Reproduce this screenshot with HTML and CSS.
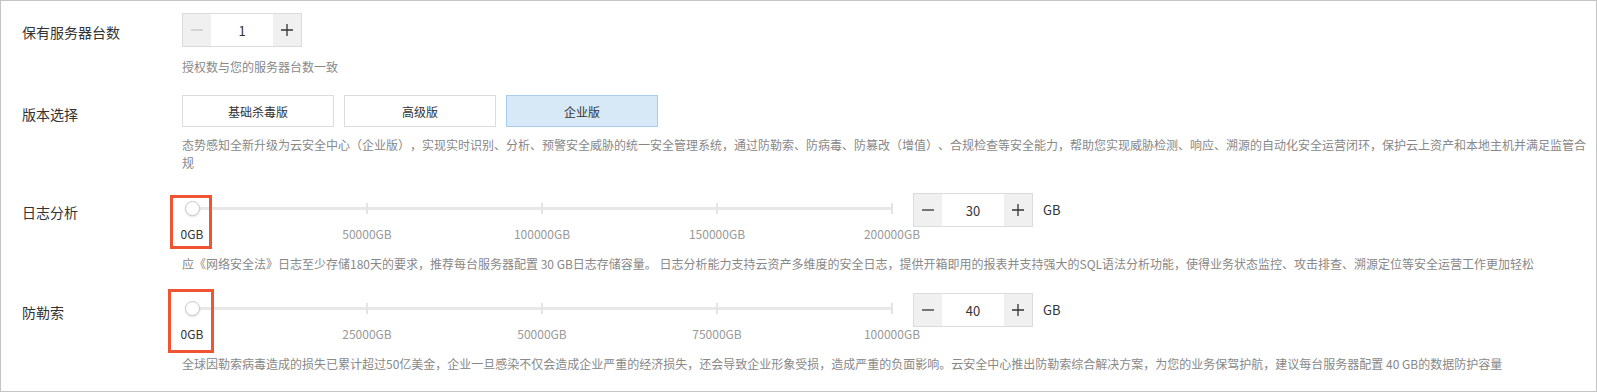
FILE: index.html
```html
<!DOCTYPE html>
<html lang="zh-CN">
<head>
<meta charset="utf-8">
<title>云安全中心</title>
<link rel="stylesheet" href="styles.css">
</head>
<body>
<div class="frame">
  <div class="row row-count">
    <div class="label">保有服务器台数</div>
    <div class="content">
      <div class="stepper">
        <span class="step-btn is-disabled"><svg width="12" height="12" viewBox="0 0 12 12"><path d="M0 6H12" /></svg></span>
        <span class="step-val">1</span>
        <span class="step-btn"><svg width="12" height="12" viewBox="0 0 12 12"><path d="M0 6H12M6 0V12" /></svg></span>
      </div>
      <div class="hint">授权数与您的服务器台数一致</div>
    </div>
  </div>

  <div class="row row-edition">
    <div class="label">版本选择</div>
    <div class="content">
      <div class="options">
        <span class="option">基础杀毒版</span>
        <span class="option">高级版</span>
        <span class="option is-active">企业版</span>
      </div>
      <div class="desc desc-edition">态势感知全新升级为云安全中心（企业版），实现实时识别、分析、预警安全威胁的统一安全管理系统，通过防勒索、防病毒、防篡改（增值）、合规检查等安全能力，帮助您实现威胁检测、响应、溯源的自动化安全运营闭环，保护云上资产和本地主机并满足监管合规</div>
    </div>
  </div>

  <div class="row row-slider">
    <div class="label">日志分析</div>
    <div class="content">
      <div class="slider-line">
        <div class="slider">
          <div class="track"></div>
          <span class="tick" style="left:25%"></span>
          <span class="tick" style="left:50%"></span>
          <span class="tick" style="left:75%"></span>
          <span class="tick" style="left:100%"></span>
          <span class="handle"></span>
          <span class="tick-label is-current" style="left:0%">0GB</span>
          <span class="tick-label" style="left:25%">50000GB</span>
          <span class="tick-label" style="left:50%">100000GB</span>
          <span class="tick-label" style="left:75%">150000GB</span>
          <span class="tick-label" style="left:100%">200000GB</span>
          <span class="mark mark-a"></span>
        </div>
        <div class="stepper">
          <span class="step-btn"><svg width="12" height="12" viewBox="0 0 12 12"><path d="M0 6H12" /></svg></span>
          <span class="step-val">30</span>
          <span class="step-btn"><svg width="12" height="12" viewBox="0 0 12 12"><path d="M0 6H12M6 0V12" /></svg></span>
        </div>
        <span class="unit">GB</span>
      </div>
      <div class="desc desc-slider">应《网络安全法》日志至少存储180天的要求，推荐每台服务器配置 30 GB日志存储容量。 日志分析能力支持云资产多维度的安全日志，提供开箱即用的报表并支持强大的SQL语法分析功能，使得业务状态监控、攻击排查、溯源定位等安全运营工作更加轻松</div>
    </div>
  </div>

  <div class="row row-slider">
    <div class="label">防勒索</div>
    <div class="content">
      <div class="slider-line">
        <div class="slider">
          <div class="track"></div>
          <span class="tick" style="left:25%"></span>
          <span class="tick" style="left:50%"></span>
          <span class="tick" style="left:75%"></span>
          <span class="tick" style="left:100%"></span>
          <span class="handle"></span>
          <span class="tick-label is-current" style="left:0%">0GB</span>
          <span class="tick-label" style="left:25%">25000GB</span>
          <span class="tick-label" style="left:50%">50000GB</span>
          <span class="tick-label" style="left:75%">75000GB</span>
          <span class="tick-label" style="left:100%">100000GB</span>
          <span class="mark mark-b"></span>
        </div>
        <div class="stepper">
          <span class="step-btn"><svg width="12" height="12" viewBox="0 0 12 12"><path d="M0 6H12" /></svg></span>
          <span class="step-val">40</span>
          <span class="step-btn"><svg width="12" height="12" viewBox="0 0 12 12"><path d="M0 6H12M6 0V12" /></svg></span>
        </div>
        <span class="unit">GB</span>
      </div>
      <div class="desc desc-slider">全球因勒索病毒造成的损失已累计超过50亿美金，企业一旦感染不仅会造成企业严重的经济损失，还会导致企业形象受损，造成严重的负面影响。云安全中心推出防勒索综合解决方案，为您的业务保驾护航，建议每台服务器配置 40 GB的数据防护容量</div>
    </div>
  </div>
</div>
</body>
</html>
```

FILE: styles.css
```css
* { box-sizing: border-box; }

html, body {
  margin: 0;
  padding: 0;
  background: #fff;
}

body {
  font-family: "Noto Sans CJK SC", "Noto Sans", sans-serif;
  color: #333;
}

.frame {
  width: 1597px;
  height: 392px;
  border: 1px solid #c4c4c4;
  padding: 12px 4px 0 21px;
  overflow: hidden;
}

.row {
  display: grid;
  grid-template-columns: 160px 1fr;
}

.row-edition { margin-top: 19px; }
.row-slider { margin-top: 21px; }
.row-slider + .row-slider { margin-top: 20px; }

.label {
  font-size: 14px;
  line-height: 20px;
  padding-top: 9px;
  color: #333;
}

.content { min-width: 0; }

/* stepper */
.stepper {
  display: flex;
  width: 120px;
  height: 34px;
  border: 1px solid #dcdcdc;
  flex: none;
}

.step-btn {
  width: 28px;
  background: #f0f0f0;
  display: flex;
  align-items: center;
  justify-content: center;
}

.step-btn svg path {
  stroke: #333;
  stroke-width: 1.3;
  fill: none;
}

.step-btn.is-disabled svg path { stroke: #c4c4c4; }

.step-val {
  flex: 1;
  background: #fff;
  display: flex;
  align-items: center;
  justify-content: center;
  font-size: 13px;
  color: #333;
}

.hint {
  margin-top: 11px;
  font-size: 12px;
  line-height: 18px;
  color: #888;
}

/* edition options */
.options {
  display: flex;
  gap: 10px;
}

.option {
  width: 152px;
  height: 32px;
  border: 1px solid #dcdcdc;
  background: #fff;
  display: flex;
  align-items: center;
  justify-content: center;
  font-size: 12px;
  color: #333;
}

.option.is-active {
  background: #d7e8f6;
  border-color: #a8cdec;
}

.desc {
  font-size: 12px;
  line-height: 18px;
  color: #888;
  text-spacing-trim: space-all;
}

.desc-edition {
  margin-top: 9px;
  max-width: 1408px;
}
.desc-slider { margin-top: 10px; }

/* slider */
.slider-line {
  display: flex;
  align-items: flex-start;
}

.slider {
  position: relative;
  width: 700px;
  height: 52px;
  margin: 0 21px 0 10px;
  flex: none;
}

.track {
  position: absolute;
  left: 0;
  right: 0;
  top: 14px;
  height: 3px;
  background: #e8e8e8;
}

.tick {
  position: absolute;
  top: 10px;
  width: 2px;
  height: 11px;
  margin-left: -1px;
  background: #e4e4e4;
}

.handle {
  position: absolute;
  left: -7px;
  top: 8px;
  width: 15px;
  height: 15px;
  border-radius: 50%;
  background: #fff;
  border: 1px solid #c9c9cf;
  box-shadow: 0 1px 2px rgba(0, 0, 0, 0.12);
}

.tick-label {
  position: absolute;
  top: 32px;
  transform: translateX(-50%);
  font-size: 12px;
  line-height: 18px;
  color: #999;
  white-space: nowrap;
}

.tick-label.is-current { color: #333; }

.mark {
  position: absolute;
  border: 3px solid #ef5533;
  pointer-events: none;
}

.mark-a {
  left: -22px;
  top: 2px;
  width: 42px;
  height: 54px;
}

.mark-b {
  left: -24px;
  top: -4px;
  width: 46px;
  height: 64px;
}

.unit {
  margin-left: 10px;
  font-size: 13px;
  line-height: 34px;
  color: #333;
}
```
